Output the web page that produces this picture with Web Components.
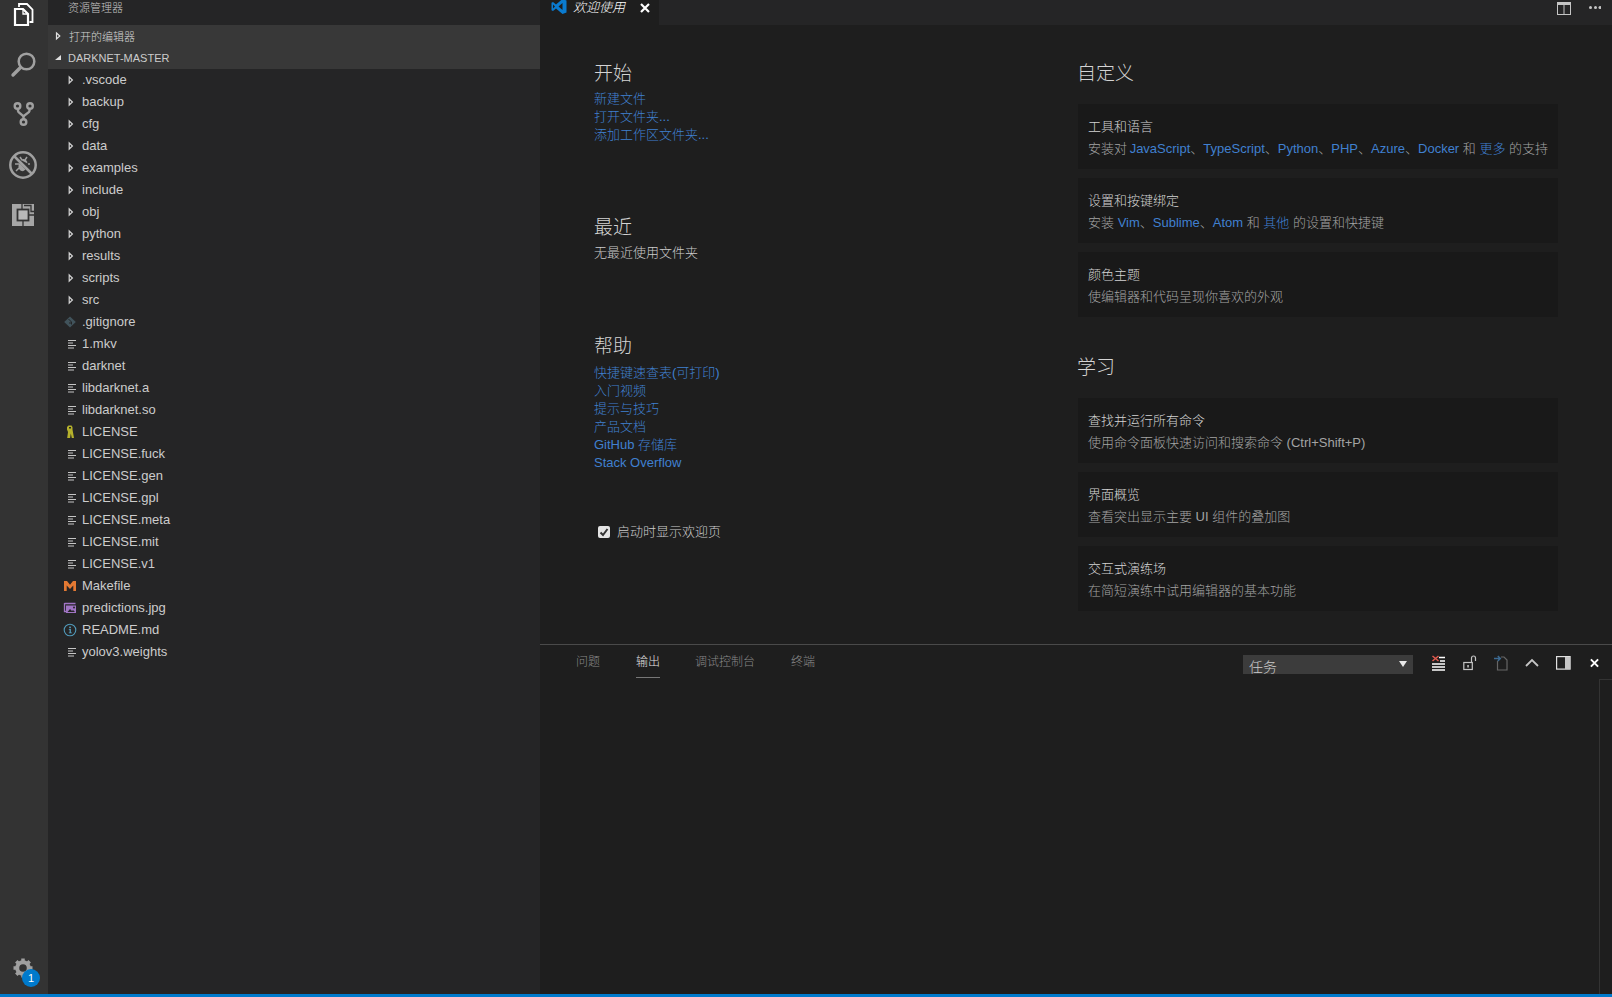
<!DOCTYPE html>
<html lang="zh"><head><meta charset="utf-8"><title>欢迎使用</title>
<style>
html,body{margin:0;height:100%;background:#1e1e1e;overflow:hidden}
body{font:300 13px "Liberation Sans","Noto Sans CJK SC",sans-serif;color:#ccc}
</style></head><body>
<vs-app>
  <vs-activity slot="activity"></vs-activity>
  <vs-explorer slot="side">
    <vs-row icon="folder">.vscode</vs-row><vs-row icon="folder">backup</vs-row><vs-row icon="folder">cfg</vs-row><vs-row icon="folder">data</vs-row><vs-row icon="folder">examples</vs-row><vs-row icon="folder">include</vs-row><vs-row icon="folder">obj</vs-row><vs-row icon="folder">python</vs-row><vs-row icon="folder">results</vs-row><vs-row icon="folder">scripts</vs-row><vs-row icon="folder">src</vs-row>
    <vs-row icon="git">.gitignore</vs-row><vs-row icon="file">1.mkv</vs-row><vs-row icon="file">darknet</vs-row><vs-row icon="file">libdarknet.a</vs-row><vs-row icon="file">libdarknet.so</vs-row><vs-row icon="key">LICENSE</vs-row><vs-row icon="file">LICENSE.fuck</vs-row><vs-row icon="file">LICENSE.gen</vs-row><vs-row icon="file">LICENSE.gpl</vs-row><vs-row icon="file">LICENSE.meta</vs-row><vs-row icon="file">LICENSE.mit</vs-row><vs-row icon="file">LICENSE.v1</vs-row><vs-row icon="make">Makefile</vs-row><vs-row icon="image">predictions.jpg</vs-row><vs-row icon="info">README.md</vs-row><vs-row icon="file">yolov3.weights</vs-row>
  </vs-explorer>
  <vs-tabbar slot="tabs"></vs-tabbar>
  <vs-welcome slot="welcome">
    <div slot="left">
      <vs-section heading="开始"><vs-link>新建文件</vs-link><vs-link>打开文件夹...</vs-link><vs-link>添加工作区文件夹...</vs-link></vs-section>
      <vs-section heading="最近" style="margin-top:71px"><vs-note>无最近使用文件夹</vs-note></vs-section>
      <vs-section heading="帮助" style="margin-top:73px"><vs-link>快捷键速查表(可打印)</vs-link><vs-link>入门视频</vs-link><vs-link>提示与技巧</vs-link><vs-link>产品文档</vs-link><vs-link>GitHub 存储库</vs-link><vs-link>Stack Overflow</vs-link></vs-section>
      <vs-startup></vs-startup>
    </div>
    <div slot="right">
      <vs-section heading="自定义" cards>
        <vs-card title="工具和语言">安装对 <a style="margin-left:-1px">JavaScript</a>、<a>TypeScript</a>、<a>Python</a>、<a>PHP</a>、<a>Azure</a>、<a>Docker</a> 和 <a>更多</a> 的支持</vs-card>
        <vs-card title="设置和按键绑定">安装 <a>Vim</a>、<a>Sublime</a>、<a>Atom</a> 和 <a>其他</a> 的设置和快捷键</vs-card>
        <vs-card title="颜色主题">使编辑器和代码呈现你喜欢的外观</vs-card>
      </vs-section>
      <vs-section heading="学习" cards style="margin-top:38px">
        <vs-card title="查找并运行所有命令">使用命令面板快速访问和搜索命令 (Ctrl+Shift+P)</vs-card>
        <vs-card title="界面概览">查看突出显示主要 UI 组件的叠加图</vs-card>
        <vs-card title="交互式演练场">在简短演练中试用编辑器的基本功能</vs-card>
      </vs-section>
    </div>
  </vs-welcome>
  <vs-panel slot="panel"></vs-panel>
</vs-app>
<script>
const def=(name,html)=>customElements.define(name,class extends HTMLElement{
  connectedCallback(){ if(this.shadowRoot)return; this.attachShadow({mode:'open'}).innerHTML=typeof html==='function'?html(this):html; }
});
def('vs-app',`<style>
:host{display:grid;grid-template-columns:48px 492px 1fr;grid-template-rows:994px 3px;height:997px;font:300 13px "Liberation Sans","Noto Sans CJK SC",sans-serif}
.ed{display:grid;grid-template-rows:25px 619px 350px;min-width:0;background:#1e1e1e}
.status{grid-column:1/-1;background:#007acc}
</style><slot name="activity"></slot><slot name="side"></slot>
<div class="ed"><slot name="tabs"></slot><slot name="welcome"></slot><slot name="panel"></slot></div><div class="status"></div>`);

def('vs-activity',`<style>
:host{display:flex;flex-direction:column;background:#333;overflow:hidden}
.list{margin-top:-10px;display:flex;flex-direction:column}
.i{height:50px;display:flex;align-items:center;justify-content:center}
.gear{margin-top:auto;position:relative;height:36px}
.b{position:absolute;left:22px;top:11px;width:18px;height:18px;border-radius:50%;background:#007acc;color:#fff;font-size:11px;line-height:18px;text-align:center}
</style><div class="list">
<div class="i"><svg width="48" height="50" viewBox="0 0 48 50"><g fill="none" stroke="#fff"><path d="M15 19h8l5 5v11H15z" stroke-width="2.200"/><path d="M23 19v5h5" stroke-width="1.300"/><path d="M19 17v-3h8l5.500 5.500V32h-3" stroke-width="1.800"/></g></svg></div>
<div class="i"><svg width="48" height="50" viewBox="0 0 48 50"><circle cx="26.500" cy="21.500" r="7.800" fill="none" stroke="#a0a0a0" stroke-width="2.500"/><path d="M20.500 27.500 13 35" stroke="#a0a0a0" stroke-width="3.400" stroke-linecap="round"/></svg></div>
<div class="i"><svg width="48" height="50" viewBox="0 0 48 50"><g fill="none" stroke="#a0a0a0" stroke-width="2.400"><circle cx="17.500" cy="16" r="2.800"/><circle cx="30" cy="16" r="2.800"/><circle cx="23.500" cy="32" r="2.800"/><path d="M18 19v2c0 2 5.500 3.500 5.500 6v2M29.500 19v2c0 2-6 3.500-6 6"/></g></svg></div>
<div class="i"><svg width="48" height="50" viewBox="0 0 48 50"><g fill="none" stroke="#a0a0a0"><circle cx="23" cy="25" r="12.700" stroke-width="2.500"/><path d="M14 16l18 18" stroke-width="2.500"/><path d="M20 17l2 3M27 17l-2 3M15 24h4M16 31l3-3M30 24h-2" stroke-width="1.500"/></g><path d="M19.500 23c-2 3-1 7 2 8 2 .5 3-.5 4-1.500z" fill="#a0a0a0"/><path d="M21 20c2-2 5-1 6 1.500l.5 2z" fill="#a0a0a0"/></svg></div>
<div class="i"><svg width="48" height="50" viewBox="0 0 48 50"><rect x="12" y="14" width="22" height="22" fill="#a6a6a6"/><rect x="17.500" y="19.500" width="11" height="11" fill="#b8b8b8" stroke="#333" stroke-width="1.800"/><path d="M22 14v5M24 15.500h7v6h3M28.500 25H34M23 31v5" fill="none" stroke="#333" stroke-width="1.300"/></svg></div>
</div>
<div class="gear i"><svg width="48" height="36" viewBox="0 0 48 36"><g transform="translate(23 10)"><circle r="5.800" fill="none" stroke="#a0a0a0" stroke-width="4"/><g stroke="#a0a0a0" stroke-width="3.500"><path d="M0-9.500V-6M0 9.500V6M-9.500 0H-6M9.500 0H6M-6.700-6.700l2 2M6.700 6.700l-2-2M-6.700 6.700l2-2M6.700-6.700l-2 2"/></g></g></svg><span class="b">1</span></div>`);

def('vs-explorer',`<style>
:host{display:block;background:#252526;overflow:hidden;min-width:0}
.title{height:25px;box-sizing:border-box;padding:1px 0 0 20px;font-size:11px;line-height:14px;color:#c4c4c4}
.sec{height:22px;background:#383838;display:flex;align-items:center;font-size:11px;color:#ccc}
.sec svg{margin:0 5px;flex:none}
.sec .o{margin-left:1px;color:#d4d4d4}
</style><div class="title">资源管理器</div>
<div class="sec"><svg width="10" height="22" viewBox="0 0 10 22"><path d="M3.500 8l3.300 3-3.300 3z" fill="#383838" stroke="#e0e0e0" stroke-width="1.200"/></svg><span class="o">打开的编辑器</span></div>
<div class="sec"><svg width="10" height="22" viewBox="0 0 10 22"><path d="M2 13h6V8z" fill="#e0e0e0"/></svg>DARKNET-MASTER</div>
<slot></slot>`);

const fi={
folder:`<svg width="16" height="22" viewBox="0 0 16 22"><path d="M7.200 8l3.200 3-3.200 3z" fill="#252526" stroke="#d4d4d4" stroke-width="1.200"/></svg>`,
file:`<svg width="16" height="22" viewBox="0 0 16 22"><path d="M6 7.500h8M6 10h5M6 12.500h8M6 15h6" stroke="#c5c5c5" stroke-width="1.100"/></svg>`,
git:`<svg width="16" height="22" viewBox="0 0 16 22"><path d="M8 5.500l5.800 5.500L8 16.500 2.200 11z" fill="#41535b"/><path d="M6.500 8l3 3v2.500M8 11v2" stroke="#252526" stroke-width="1" fill="none"/></svg>`,
key:`<svg width="16" height="22" viewBox="0 0 16 22"><path d="M6.500 4.500h3l1 1.500v2.500l1.500 8.500h-2.200l-1-4.500-.7 4.500H5.200L6 11 5 8.500V6z" fill="#b5b12c"/><rect x="7" y="6" width="2" height="1.500" fill="#252526"/></svg>`,
make:`<svg width="16" height="22" viewBox="0 0 16 22"><path d="M2 6h3l3 3.800L11 6h3v10h-2.700v-5.500L8 14 4.700 10.500V16H2z" fill="#e37933"/></svg>`,
image:`<svg width="16" height="22" viewBox="0 0 16 22"><path d="M2.500 6.500h11M2.500 6v8.500h1.500" fill="none" stroke="#a074c4" stroke-width="1.300"/><rect x="4" y="8.500" width="10" height="7.500" fill="#a074c4"/><path d="M5.500 15l2.500-3 2 2 1-1 2 2z" fill="#252526"/><circle cx="12" cy="10.500" r="1" fill="#252526"/></svg>`,
info:`<svg width="16" height="22" viewBox="0 0 16 22"><circle cx="8" cy="11" r="5.800" fill="none" stroke="#519aba" stroke-width="1.100"/><rect x="7.200" y="7.600" width="1.700" height="1.600" fill="#519aba"/><path d="M6.800 10h2.100v3.400h1v.8H6.800v-.8h.8V10.800h-.8z" fill="#519aba"/></svg>`};
def('vs-row',h=>`<style>
:host{display:flex;height:22px;align-items:center;padding-left:14px;white-space:nowrap;color:#ccc;font-size:13px}
svg{display:block;flex:none}
span{margin-left:4px;padding-bottom:2px}
</style>${fi[h.getAttribute('icon')]}<span><slot></slot></span>`);

def('vs-tabbar',`<style>
:host{display:flex;background:#252526;height:25px;overflow:hidden;justify-content:space-between}
.tab{width:119px;background:#1e1e1e;display:flex;color:#fff;font-style:italic;font-size:13px}
.logo{margin:-2px 0 0 11px}
.t{margin:0 0 0 6px;line-height:16px}
.x{margin:3px 0 0 15px}
.act{display:flex;gap:18px;padding:2px 11px 0 0;align-items:flex-start}
</style><div class="tab">
<svg class="logo" width="16" height="17" viewBox="0 0 16 17"><path d="M11.500 1L15.500 2.500V14.500L11.500 16 5 10.500 2 13 .5 12.200V4.800L2 4 5 6.500zM11.500 5L7.500 8.500l4 3.500zM2 6.500v4L4 8.500z" fill="#0a7bd0" fill-rule="evenodd"/></svg>
<span class="t">欢迎使用</span>
<svg class="x" width="10" height="10" viewBox="0 0 10 10"><path d="M1 1l8 8M9 1l-8 8" stroke="#fff" stroke-width="2.200"/></svg></div>
<div class="act"><svg width="14" height="13" viewBox="0 0 14 13"><path d="M0 0h14v13H0z" fill="#c5c5c5"/><rect x="1" y="3" width="5.500" height="9" fill="#252526"/><rect x="7.500" y="3" width="5.500" height="9" fill="#252526"/></svg>
<svg width="12" height="12" viewBox="0 0 12 12"><g fill="#c5c5c5"><circle cx="1.500" cy="5.500" r="1.500"/><circle cx="6.500" cy="5.500" r="1.500"/><circle cx="11" cy="5.500" r="1.500"/></g></svg></div>`);

def('vs-welcome',`<style>
:host{display:grid;grid-template-columns:483px 481px;padding:36px 0 0 54px;box-sizing:border-box;overflow:hidden;background:#1e1e1e}
</style><slot name="left"></slot><slot name="right"></slot>`);

def('vs-section',h=>{const help=h.getAttribute('heading')==='帮助';const c=h.hasAttribute('cards');
return `<style>
:host{display:block}
.h{font-size:19px;line-height:24px;color:#d4d4d4;padding-top:${help?0:1}px;margin-bottom:${(c?19:5)-(help?0:1)}px}
</style><div class="h">${h.getAttribute('heading')}</div><slot></slot>`});

def('vs-link',`<style>:host{display:block;line-height:18px;color:#4080d0;font-size:13px}</style><slot></slot>`);
def('vs-note',`<style>:host{display:block;line-height:18px;color:#ccc;font-size:13px}</style><slot></slot>`);
def('vs-startup',`<style>
:host{display:flex;align-items:center;margin:51px 0 0 4px;height:18px;color:#ccc;font-size:13px}
.c{width:12px;height:12px;border-radius:2px;background:#e4e4e4;display:block;margin-right:7px}
span{padding-bottom:4px}
</style><svg class="c" viewBox="0 0 12 12"><path d="M2.500 6.500l2.500 2.500 4.500-6" fill="none" stroke="#333" stroke-width="2"/></svg><span>启动时显示欢迎页</span>`);
def('vs-card',h=>`<style>
:host{display:block;box-sizing:border-box;height:65px;margin:0 0 9px 1px;padding:14px 10px 0;background:#191919;color:#a4a4a4;font-size:13px;white-space:nowrap}
.t{color:#d4d4d4;line-height:18px;margin-bottom:2px;height:18px}
.d{line-height:21px}
::slotted(a){color:#4080d0}
</style><div class="t">${h.getAttribute('title')}</div><div class="d"><slot></slot></div>`);

def('vs-panel',`<style>
:host{display:block;border-top:1px solid #4a4a4a;box-sizing:border-box;height:350px;position:relative;background:#1e1e1e}
.bar{display:flex;height:33px;align-items:flex-start}
.tabs{display:flex;gap:36px;padding:8px 0 0 36px;font-size:12px;color:#8a8a8a}
.tab{height:25px;line-height:18px;box-sizing:border-box}
.tab:nth-child(3){margin-left:-1px}
.on{color:#e0e0e0;border-bottom:1px solid #777}
.right{margin-left:auto;display:flex;align-items:flex-start;margin-top:10px;padding-right:13px}
.sel{width:170px;height:19px;background:#3c3c3c;color:#ccc;font-size:14px;line-height:24px;padding-left:6px;box-sizing:border-box;position:relative;overflow:hidden;margin-right:19px}
.arr{position:absolute;right:6px;top:6px;width:0;height:0;border:4px solid transparent;border-top:6px solid #e8e8e8;border-bottom:0}
.ico{display:flex;align-items:center;height:16px}
.ico span{width:31px;display:flex}
.ico span.sp{width:34px}
.ico span.cl{width:9px}
.mini{position:absolute;right:0;top:34px;bottom:0;width:12px;border-left:1px solid #333;border-top:1px solid #333}
</style><div class="bar"><div class="tabs"><div class="tab">问题</div><div class="tab on">输出</div><div class="tab">调试控制台</div><div class="tab">终端</div></div>
<div class="right"><div class="sel">任务<i class="arr"></i></div>
<div class="ico">
<span><svg width="13" height="16" viewBox="0 0 13 16"><path d="M0 9h13M0 12h13M0 15h13" stroke="#fff" stroke-width="1.500"/><path d="M7 2.500h6M8 6h5" stroke="#fff" stroke-width="1.300"/><path d="M.5 1l6 5M6.500 1l-6 5" stroke="#e05a4e" stroke-width="1.500"/></svg></span>
<span><svg width="14" height="16" viewBox="0 0 14 16"><rect x=".8" y="7.500" width="8.500" height="7" fill="none" stroke="#c5c5c5" stroke-width="1.200"/><rect x="4.300" y="10" width="1.500" height="2.500" fill="#c5c5c5"/><path d="M8.500 7.500V3a2 2 0 0 1 4 0v3" fill="none" stroke="#c5c5c5" stroke-width="1.200"/></svg></span>
<span><svg width="14" height="16" viewBox="0 0 14 16"><path d="M3.500 6v9h9.500V5l-3-3H7" fill="none" stroke="#666" stroke-width="1.200"/><path d="M0 3.500h6M3.800 1l2.500 2.500L3.800 6" fill="none" stroke="#3c6a92" stroke-width="1.500"/></svg></span>
<span><svg width="14" height="10" viewBox="0 0 14 10"><path d="M1 8l6-6 6 6" fill="none" stroke="#c5c5c5" stroke-width="1.800"/></svg></span>
<span class="sp"><svg width="15" height="14" viewBox="0 0 15 14"><rect x=".6" y=".6" width="13.500" height="12.500" fill="none" stroke="#e0e0e0" stroke-width="1.200"/><rect x="9" y="1" width="5" height="12" fill="#c5c5c5"/></svg></span>
<span class="cl"><svg width="10" height="10" viewBox="0 0 10 10"><path d="M1 1l8 8M9 1l-8 8" stroke="#fff" stroke-width="2.200"/></svg></span>
</div></div></div><div class="mini"></div>`);
</script>
</body></html>
